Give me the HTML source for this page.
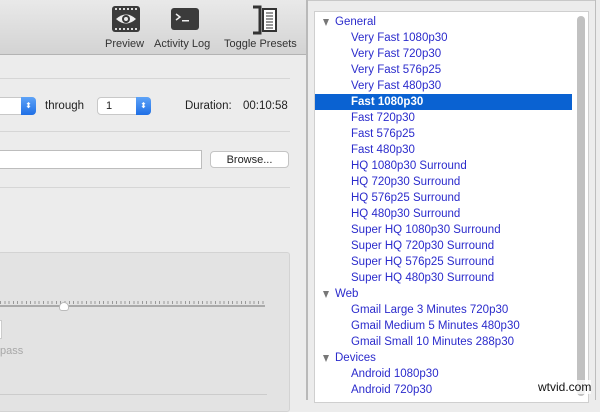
<!DOCTYPE html>
<html><head><style>
*{margin:0;padding:0;box-sizing:border-box}
body{width:600px;height:400px;overflow:hidden;background:#ececec;font-family:"Liberation Sans",sans-serif;font-size:11px;color:#222;position:relative}
.a{position:absolute}
.line{position:absolute;height:1px;background:#d6d6d6}
.row{position:absolute;left:0;width:257px;height:16px;line-height:16px;color:#2b2bcc;white-space:nowrap;font-size:11.5px}
.it{padding-left:36px}
.hd{padding-left:20px}
.tri{position:absolute;left:8px;top:5px;width:0;height:0;border-left:3.5px solid transparent;border-right:3.5px solid transparent;border-top:7px solid #777}
.sel{background:#0a62d2;color:#fff;font-weight:bold}
</style></head><body>
<div class="a" style="left:0;top:0;width:307px;height:55px;background:linear-gradient(#e9e9e9,#d3d3d3);border-bottom:1px solid #b3b3b3"></div>
<svg class="a" style="left:110px;top:5px" width="172" height="30">
 <rect x="2" y="1" width="28" height="26" rx="3" fill="#3b3b3b"/>
 <g fill="#ddd"><rect x="5" y="3" width="2" height="2"/><rect x="9" y="3" width="2" height="2"/><rect x="13" y="3" width="2" height="2"/><rect x="17" y="3" width="2" height="2"/><rect x="21" y="3" width="2" height="2"/><rect x="25" y="3" width="2" height="2"/>
 <rect x="5" y="23" width="2" height="2"/><rect x="9" y="23" width="2" height="2"/><rect x="13" y="23" width="2" height="2"/><rect x="17" y="23" width="2" height="2"/><rect x="21" y="23" width="2" height="2"/><rect x="25" y="23" width="2" height="2"/></g>
 <path d="M6 14 Q16 5 26 14 Q16 23 6 14Z" fill="#eee"/><circle cx="16" cy="14" r="4" fill="#3b3b3b"/><circle cx="16" cy="14" r="2" fill="#eee"/>
 <rect x="61" y="3" width="28" height="22" rx="3" fill="#3b3b3b"/>
 <path d="M66 9 L70 12 L66 15" stroke="#eee" stroke-width="1.5" fill="none"/><rect x="72" y="15" width="7" height="1.5" fill="#eee"/>
 <path d="M143 2 H150 V28 H143" stroke="#333" stroke-width="3" fill="none"/>
 <rect x="153" y="4" width="13" height="22" fill="#fff" stroke="#333" stroke-width="2"/>
 <g stroke="#333" stroke-width="1"><path d="M156 8H163M156 11H163M156 14H163M156 17H163M156 20H163M156 23H163"/></g>
</svg>
<div class="a" style="left:105px;top:38px;font-size:11px;color:#333">Preview</div>
<div class="a" style="left:154px;top:38px;font-size:11px;color:#333">Activity Log</div>
<div class="a" style="left:224px;top:38px;font-size:11px;color:#333">Toggle Presets</div>

<div class="line" style="left:0;top:78px;width:290px"></div>
<div class="a" style="left:-4px;top:97px;width:40px;height:18px;background:#fff;border:1px solid #c8c8c8;border-radius:4px"></div>
<div class="a" style="left:21px;top:97px;width:15px;height:18px;background:linear-gradient(#5ea3f8,#1f6fe6);border-radius:0 4px 4px 0;color:#fff;font-size:8px;text-align:center;line-height:18px">⬍</div>
<div class="a" style="left:45px;top:100px;font-size:11.5px">through</div>
<div class="a" style="left:97px;top:97px;width:54px;height:18px;background:#fff;border:1px solid #c8c8c8;border-radius:4px;padding-left:8px;line-height:16px">1</div>
<div class="a" style="left:136px;top:97px;width:15px;height:18px;background:linear-gradient(#5ea3f8,#1f6fe6);border-radius:0 4px 4px 0;color:#fff;font-size:8px;text-align:center;line-height:18px">⬍</div>
<div class="a" style="left:185px;top:100px;font-size:11.5px">Duration:</div>
<div class="a" style="left:243px;top:100px;font-size:11.5px">00:10:58</div>
<div class="line" style="left:0;top:131px;width:290px"></div>
<div class="a" style="left:-2px;top:150px;width:204px;height:19px;background:#fff;border:1px solid #bdbdbd"></div>
<div class="a" style="left:210px;top:151px;width:79px;height:17px;background:#fff;border:1px solid #c4c4c4;border-radius:4px;text-align:center;line-height:16px">Browse...</div>
<div class="line" style="left:0;top:187px;width:290px"></div>

<div class="a" style="left:-2px;top:252px;width:292px;height:160px;background:#e3e3e3;border:1px solid #d3d3d3;border-radius:3px"></div>
<div class="a" style="left:0;top:305px;width:265px;height:2px;background:#aaa"></div>
<div class="a" style="left:0;top:301px;width:265px;height:3px;background:repeating-linear-gradient(90deg,#999 0 1px,transparent 1px 4.3px)"></div>
<div class="a" style="left:59px;top:302px;width:10px;height:9px;background:#fff;border:1px solid #bbb;border-radius:5px 5px 3px 3px"></div>
<div class="a" style="left:-5px;top:320px;width:7px;height:19px;background:#fff;border:1px solid #ccc"></div>
<div class="a" style="left:0;top:345px;color:#a8a8a8">pass</div>
<div class="line" style="left:0;top:394px;width:267px;background:#ccc"></div>

<div class="a" style="left:306px;top:0;width:2px;height:400px;background:#b9b9b9"></div>
<div class="a" style="left:308px;top:0;width:288px;height:400px;background:#ececec;border-top:1px solid #c8c8c8"></div>
<div class="a" style="left:595px;top:0;width:1px;height:400px;background:#bdbdbd"></div>
<div class="a" style="left:314px;top:11px;width:275px;height:392px;background:#fff;border:1px solid #cfcfcf">
 <div class="a" style="left:262px;top:4px;width:8px;height:380px;background:#c1c1c1;border-radius:4px"></div>
 <div class="a" style="left:0;top:1px;width:260px">
  <div class="row hd" style="top:1px"><span class="tri"></span>General</div>
  <div class="row it" style="top:17px">Very Fast 1080p30</div>
  <div class="row it" style="top:33px">Very Fast 720p30</div>
  <div class="row it" style="top:49px">Very Fast 576p25</div>
  <div class="row it" style="top:65px">Very Fast 480p30</div>
  <div class="row it sel" style="top:81px">Fast 1080p30</div>
  <div class="row it" style="top:97px">Fast 720p30</div>
  <div class="row it" style="top:113px">Fast 576p25</div>
  <div class="row it" style="top:129px">Fast 480p30</div>
  <div class="row it" style="top:145px">HQ 1080p30 Surround</div>
  <div class="row it" style="top:161px">HQ 720p30 Surround</div>
  <div class="row it" style="top:177px">HQ 576p25 Surround</div>
  <div class="row it" style="top:193px">HQ 480p30 Surround</div>
  <div class="row it" style="top:209px">Super HQ 1080p30 Surround</div>
  <div class="row it" style="top:225px">Super HQ 720p30 Surround</div>
  <div class="row it" style="top:241px">Super HQ 576p25 Surround</div>
  <div class="row it" style="top:257px">Super HQ 480p30 Surround</div>
  <div class="row hd" style="top:273px"><span class="tri"></span>Web</div>
  <div class="row it" style="top:289px">Gmail Large 3 Minutes 720p30</div>
  <div class="row it" style="top:305px">Gmail Medium 5 Minutes 480p30</div>
  <div class="row it" style="top:321px">Gmail Small 10 Minutes 288p30</div>
  <div class="row hd" style="top:337px"><span class="tri"></span>Devices</div>
  <div class="row it" style="top:353px">Android 1080p30</div>
  <div class="row it" style="top:369px">Android 720p30</div>
 </div>
</div>
<div class="a" style="left:538px;top:380px;font-size:12px;color:#111;background:rgba(255,255,255,.8)">wtvid.com</div>
</body></html>
